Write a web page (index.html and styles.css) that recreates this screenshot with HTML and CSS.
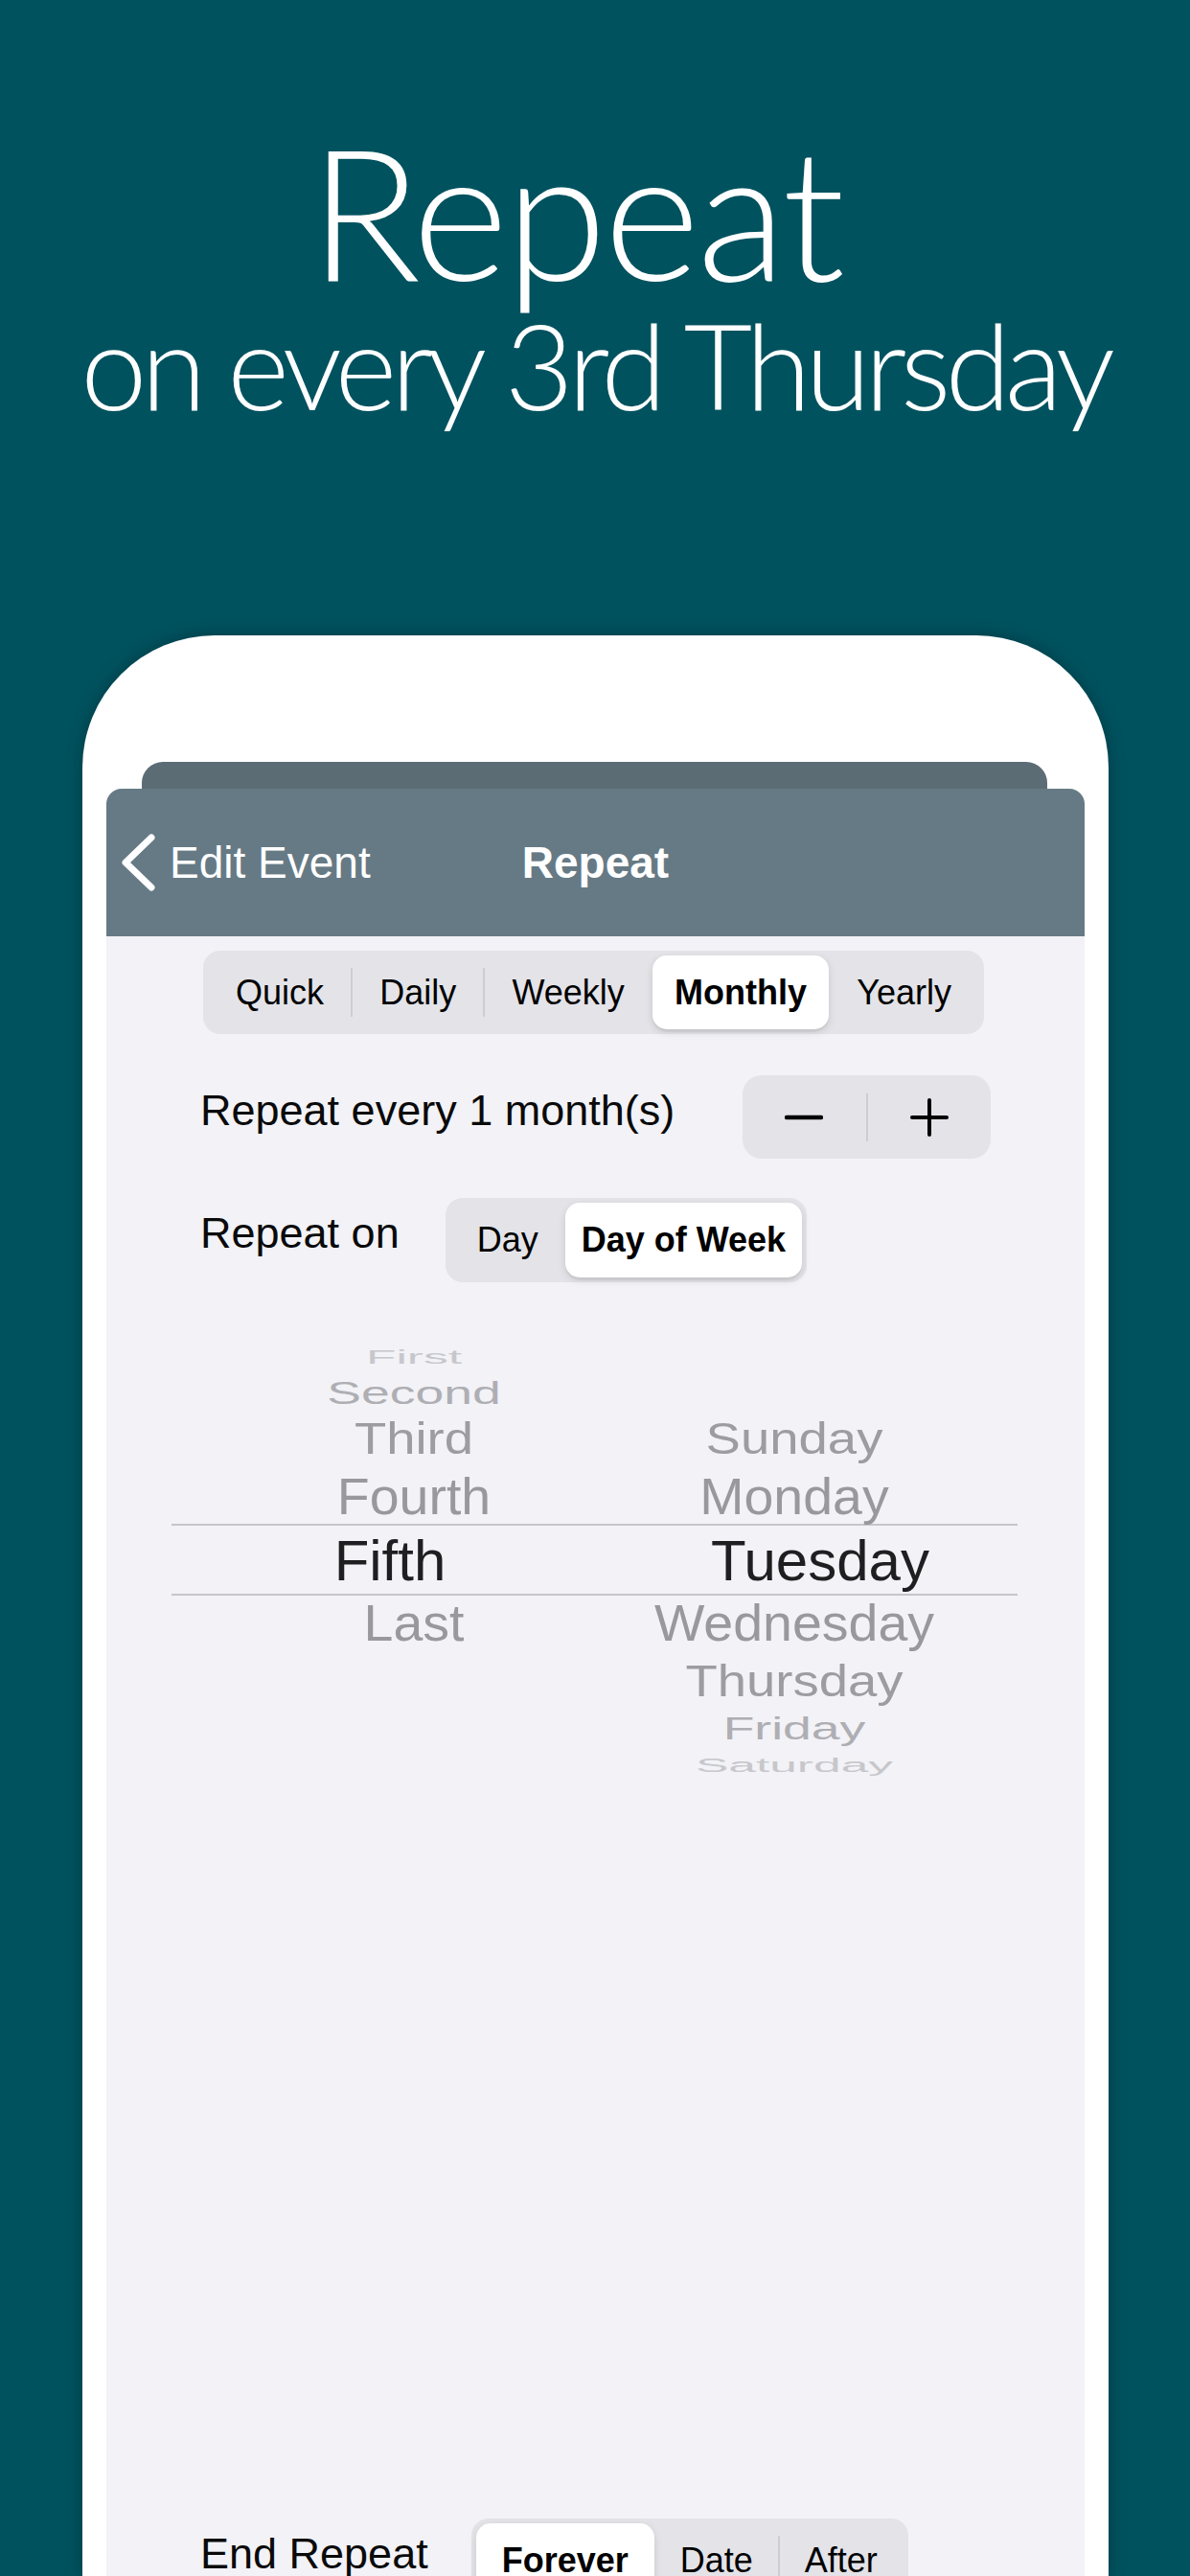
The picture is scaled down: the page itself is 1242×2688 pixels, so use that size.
FILE: index.html
```html
<!DOCTYPE html>
<html>
<head>
<meta charset="utf-8">
<link rel="stylesheet" href="styles.css">
</head>
<body>
<header class="hero">
  <h1 class="hero-title">Repeat</h1>
  <p class="hero-sub">on every 3rd Thursday</p>
</header>
<div class="phone">
  <div class="back-card"></div>
  <div class="sheet">
    <div class="nav">
      <div class="nav-back">
        <svg class="chev" width="40" height="66" viewBox="0 0 40 66"><path d="M34 7 L7 33 L34 59" fill="none" stroke="#fff" stroke-width="7" stroke-linecap="round" stroke-linejoin="round"/></svg>
        <span>Edit Event</span>
      </div>
      <div class="nav-title">Repeat</div>
      <div></div>
    </div>

    <div class="seg seg-main">
      <div class="seg-item">Quick</div>
      <div class="seg-item sep">Daily</div>
      <div class="seg-item sep">Weekly</div>
      <div class="seg-item on">Monthly</div>
      <div class="seg-item">Yearly</div>
    </div>

    <div class="row row-count">
      <span class="label">Repeat every 1 month(s)</span>
      <div class="stepper">
        <div class="step-btn"><svg width="40" height="40" viewBox="0 0 40 40"><path d="M2 20H38" stroke="#000" stroke-width="4.5" stroke-linecap="round"/></svg></div>
        <div class="step-div"></div>
        <div class="step-btn"><svg width="40" height="40" viewBox="0 0 40 40"><path d="M2 20H38M20 2V38" stroke="#000" stroke-width="4" stroke-linecap="round"/></svg></div>
      </div>
    </div>

    <div class="row row-on">
      <span class="label">Repeat on</span>
      <div class="seg seg-on">
        <div class="seg-item seg-day">Day</div>
        <div class="seg-item seg-dow on">Day of Week</div>
      </div>
    </div>

    <div class="picker">
      <div class="pick-band"></div>
      <div class="pick-col col-left">
        <div class="slot s4"><span>First</span></div>
        <div class="slot s3"><span>Second</span></div>
        <div class="slot s2"><span>Third</span></div>
        <div class="slot s1"><span>Fourth</span></div>
        <div class="slot s0"><span>Fifth</span></div>
        <div class="slot s1"><span>Last</span></div>
        <div class="slot s2"></div>
        <div class="slot s3"></div>
        <div class="slot s4"></div>
      </div>
      <div class="pick-col col-right">
        <div class="slot s4"></div>
        <div class="slot s3"></div>
        <div class="slot s2"><span>Sunday</span></div>
        <div class="slot s1"><span>Monday</span></div>
        <div class="slot s0"><span>Tuesday</span></div>
        <div class="slot s1"><span>Wednesday</span></div>
        <div class="slot s2"><span>Thursday</span></div>
        <div class="slot s3"><span>Friday</span></div>
        <div class="slot s4"><span>Saturday</span></div>
      </div>
    </div>

    <div class="row row-end">
      <span class="label">End Repeat</span>
      <div class="seg seg-end">
        <div class="seg-item on">Forever</div>
        <div class="seg-item">Date</div>
        <div class="seg-item sep">After</div>
      </div>
    </div>
  </div>
</div>
</body>
</html>
```

FILE: styles.css
```css
html, body {
  margin: 0;
  padding: 0;
}
body {
  width: 1242px;
  height: 2688px;
  overflow: hidden;
  background: #01525f;
  font-family: "Liberation Sans", Arial, sans-serif;
}

/* hero */
.hero {
  padding-top: 119px;
  text-align: center;
  color: #fff;
  font-family: "Lato", "Open Sans", sans-serif;
  font-weight: 300;
}
.hero-title {
  margin: 0;
  padding-right: 40px;
  font-size: 192px;
  line-height: 200px;
  font-weight: 300;
  letter-spacing: -3px;
}
.hero-sub {
  margin: 1px 0 0;
  font-size: 124px;
  line-height: 120px;
  letter-spacing: -6px;
}

/* phone */
.phone {
  margin: 223px 85px 0 86px;
  height: 2025px;
  box-sizing: border-box;
  padding: 132px 25px 0;
  background: #fff;
  border-radius: 138px 138px 0 0;
  display: flex;
  flex-direction: column;
  overflow: hidden;
  box-shadow: 0 0 18px rgba(0, 0, 0, 0.28);
}
.back-card {
  flex: none;
  height: 28px;
  margin: 0 39px 0 37px;
  background: #5c6c75;
  border-radius: 22px 22px 0 0;
}
.sheet {
  flex: 1;
  background: #f2f2f7;
  border-radius: 16px 16px 0 0;
  overflow: hidden;
  display: flex;
  flex-direction: column;
}

/* nav */
.nav {
  flex: none;
  height: 154px;
  background: #667a85;
  display: grid;
  grid-template-columns: 1fr auto 1fr;
  align-items: center;
  color: #fff;
}
.nav-back {
  display: flex;
  align-items: center;
  gap: 13px;
  padding-left: 13px;
  font-size: 46px;
}
.chev {
  display: block;
}
.nav-title {
  font-size: 46px;
  font-weight: 700;
}

/* segmented controls */
.seg {
  display: flex;
  box-sizing: border-box;
  padding: 5px;
  background: #e3e3e8;
  border-radius: 18px;
}
.seg-item {
  position: relative;
  flex: 1 1 auto;
  display: flex;
  align-items: center;
  justify-content: center;
  padding: 0 26px;
  font-size: 36px;
  color: #000;
  border-radius: 15px;
  white-space: nowrap;
}
.seg-item.sep::before {
  content: "";
  position: absolute;
  left: -1px;
  top: 13px;
  bottom: 13px;
  width: 2px;
  background: #cdcdd2;
}
.seg-item.on {
  background: #fff;
  font-weight: 700;
  box-shadow: 0 3px 8px rgba(0, 0, 0, 0.12), 0 3px 1px rgba(0, 0, 0, 0.04);
}
.seg-main {
  flex: none;
  align-self: flex-start;
  width: 815px;
  height: 87px;
  margin: 15px 0 0 101px;
}
.seg-main .seg-item.on {
  padding: 0 20px;
}

/* rows */
.row {
  flex: none;
  display: flex;
  align-items: center;
  padding: 0 98px;
  font-size: 45px;
  color: #0a0a0a;
}
.label {
  padding-bottom: 14px;
  white-space: nowrap;
}
.row-count {
  justify-content: space-between;
  margin-top: 43px;
}
.stepper {
  display: flex;
  align-items: center;
  width: 259px;
  height: 87px;
  background: #e3e3e8;
  border-radius: 20px;
}
.step-btn {
  flex: 1;
  height: 100%;
  display: flex;
  align-items: center;
  justify-content: center;
}
.step-btn svg {
  display: block;
}
.step-div {
  width: 2px;
  height: 50px;
  background: #cdcdd2;
}

.row-on {
  margin-top: 41px;
  gap: 48px;
}
.seg-on {
  height: 88px;
}
.seg-on .seg-item {
  flex: none;
}
.seg-day {
  padding: 0 28px;
}
.seg-dow {
  padding: 0 17px;
}

/* picker */
.picker {
  flex: none;
  position: relative;
  margin: 60.5px 70px 0 68px;
  display: grid;
  grid-template-columns: 506px 288px;
}
.pick-band {
  position: absolute;
  left: 0;
  right: 0;
  top: 191.5px;
  height: 75px;
  box-sizing: border-box;
  border-top: 2px solid #c6c6ca;
  border-bottom: 2px solid #c6c6ca;
  pointer-events: none;
}
.pick-col {
  display: flex;
  flex-direction: column;
}
.slot {
  display: flex;
  align-items: center;
  justify-content: center;
  white-space: nowrap;
  line-height: 1;
}
.slot span {
  display: inline-block;
}
.s0 { height: 67.5px; }
.s1 { height: 65px; }
.s2 { height: 55.75px; }
.s3 { height: 41.5px; }
.s4 { height: 34px; }

.s0 span { font-size: 60px; color: #1f1f21; }
.s1 span { font-size: 55.5px; color: #98989d; transform: scaleY(0.95); }
.s2 span { font-size: 54.5px; color: #9c9ca1; transform: scaleY(0.85); }
.s3 span { font-size: 53.5px; color: #aeaeb3; transform: scaleY(0.62); }
.s4 span { font-size: 51.5px; color: #c7c7cb; transform: scaleY(0.41); }
.col-left .s0 span { transform: translateX(-25px); }
.col-right .s0 span { transform: translateX(27px); }

/* end repeat */
.row-end {
  margin-top: 769.5px;
  gap: 45px;
}
.seg-end {
  width: 456px;
  height: 87px;
}
.seg-end .seg-item {
  padding: 0 20px;
}
```
